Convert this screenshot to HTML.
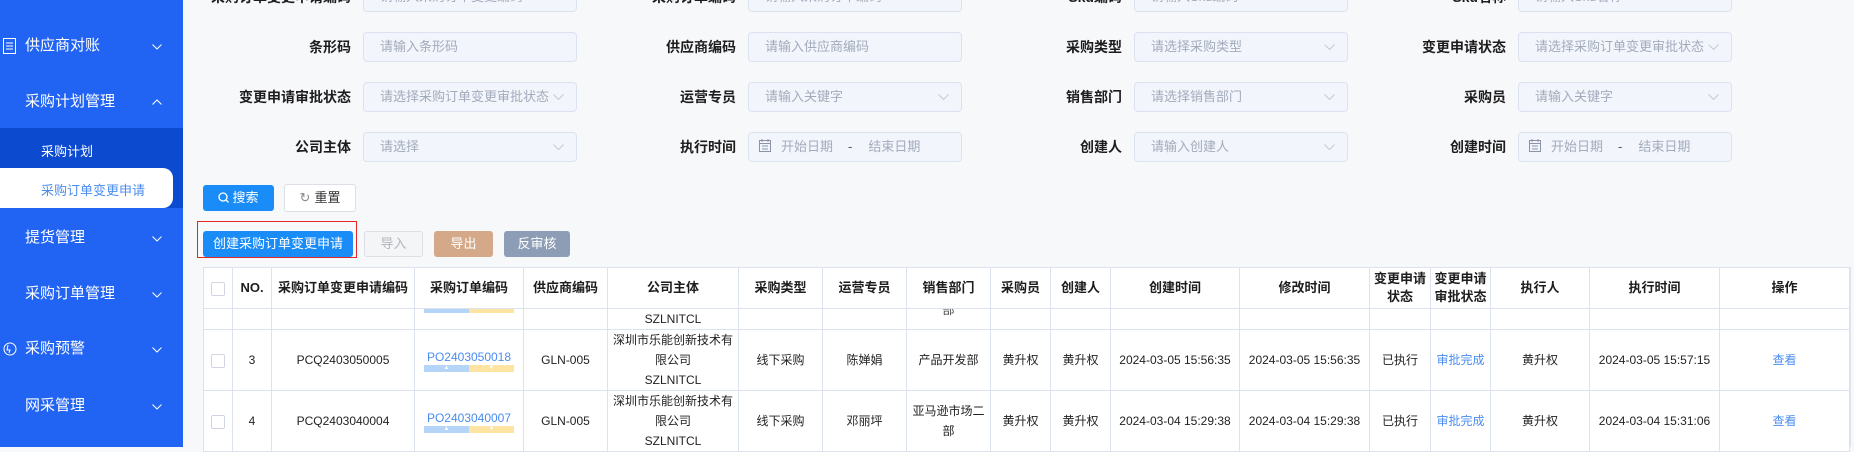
<!DOCTYPE html>
<html><head><meta charset="utf-8">
<style>
*{margin:0;padding:0;box-sizing:border-box}
body{width:1854px;height:447px;overflow:hidden;background:#f7f8fa;font-family:"Liberation Sans","Noto Sans CJK SC",sans-serif;position:relative;color:#222}
.sb{position:absolute;left:0;top:0;width:183px;height:447px;background:#2163f2}
.mi{position:absolute;left:25px;color:#fff;font-size:15px;line-height:20px}
.chev{position:absolute;left:152px;width:10px;height:6px}
.sub{position:absolute;left:0;top:128px;width:183px;height:80px;background:#0c4ad0}
.pill{position:absolute;left:0;top:168px;width:173px;height:40px;background:#fff;border-radius:0 10px 10px 0}
.lbl{position:absolute;font-size:14px;font-weight:bold;text-align:right;width:200px;line-height:20px;color:#1d1d1d}
.inp{position:absolute;width:214px;height:30px;background:#f2f5fb;border:1px solid #dbe2ef;border-radius:4px;font-size:13px;color:#a3abbb;line-height:28px;padding-left:16px;white-space:nowrap}
.inp svg.ar{position:absolute;right:12px;top:11px}
.btn{position:absolute;font-size:13px;text-align:center;border-radius:3px}
table{position:absolute;left:203px;top:267px;border-collapse:collapse;table-layout:fixed;background:#fff}
td,th{border:1px solid #dde3ee;text-align:center;vertical-align:middle;font-size:12px;line-height:20px;overflow:hidden;color:#222}
th{font-size:13px;font-weight:bold;height:41px;line-height:18px;color:#1d1d1d}
.cb{display:inline-block;width:14px;height:14px;border:1px solid #cfd6e2;border-radius:2px;background:#fff;vertical-align:middle}
.lk{color:#4a8cf0}
.bars{display:flex;width:90px;height:7px;margin:0 auto}
.bars span{flex:1;font-size:6px;line-height:7px;color:#fff}
.b1{background:#b5d5f8}.b2{background:#fde4a2}
</style></head><body>
<div class="sb">
  <svg style="position:absolute;left:3px;top:38px" width="13" height="16" viewBox="0 0 13 16"><rect x="0.5" y="0.5" width="12" height="15" fill="none" stroke="#fff"/><path d="M3 5h7M3 8h7M3 11h7" stroke="#fff"/></svg>
  <div class="mi" style="top:36px">供应商对账</div>
  <svg class="chev" style="top:44px" viewBox="0 0 10 6"><path d="M0.5 0.5L5 5 9.5 0.5" fill="none" stroke="#fff"/></svg>
  <div class="mi" style="top:92px">采购计划管理</div>
  <svg class="chev" style="top:99px" viewBox="0 0 10 6"><path d="M0.5 5.5L5 1 9.5 5.5" fill="none" stroke="#fff"/></svg>
  <div class="sub"></div>
  <div class="mi" style="top:142px;left:41px;font-size:13px">采购计划</div>
  <div class="pill"></div>
  <div class="mi" style="top:181px;left:41px;font-size:13px;color:#4a8cf0">采购订单变更申请</div>
  <div class="mi" style="top:228px">提货管理</div>
  <svg class="chev" style="top:236px" viewBox="0 0 10 6"><path d="M0.5 0.5L5 5 9.5 0.5" fill="none" stroke="#fff"/></svg>
  <div class="mi" style="top:284px">采购订单管理</div>
  <svg class="chev" style="top:292px" viewBox="0 0 10 6"><path d="M0.5 0.5L5 5 9.5 0.5" fill="none" stroke="#fff"/></svg>
  <svg style="position:absolute;left:3px;top:342px" width="14" height="14" viewBox="0 0 14 14"><circle cx="7" cy="7" r="6" fill="none" stroke="#fff"/><path d="M5 3L4 8h3l-1 3" fill="none" stroke="#fff"/></svg>
  <div class="mi" style="top:339px">采购预警</div>
  <svg class="chev" style="top:347px" viewBox="0 0 10 6"><path d="M0.5 0.5L5 5 9.5 0.5" fill="none" stroke="#fff"/></svg>
  <div class="mi" style="top:396px">网采管理</div>
  <svg class="chev" style="top:404px" viewBox="0 0 10 6"><path d="M0.5 0.5L5 5 9.5 0.5" fill="none" stroke="#fff"/></svg>
</div>

<div class="lbl" style="left:151px;top:-13px">采购订单变更申请编码</div><div class="inp" style="left:363px;top:-18px">请输入采购订单变更编码</div>
<div class="lbl" style="left:536px;top:-13px">采购订单编码</div><div class="inp" style="left:748px;top:-18px">请输入采购订单编码</div>
<div class="lbl" style="left:922px;top:-13px">Sku编码</div><div class="inp" style="left:1134px;top:-18px">请输入Sku编码</div>
<div class="lbl" style="left:1306px;top:-13px">Sku名称</div><div class="inp" style="left:1518px;top:-18px">请输入Sku名称</div>

<div class="lbl" style="left:151px;top:37px">条形码</div><div class="inp" style="left:363px;top:32px">请输入条形码</div>
<div class="lbl" style="left:536px;top:37px">供应商编码</div><div class="inp" style="left:748px;top:32px">请输入供应商编码</div>
<div class="lbl" style="left:922px;top:37px">采购类型</div><div class="inp" style="left:1134px;top:32px">请选择采购类型<svg class="ar" width="11" height="6" viewBox="0 0 11 6"><path d="M0.5 0.5L5.5 5.5 10.5 0.5" fill="none" stroke="#c4cad6"/></svg></div>
<div class="lbl" style="left:1306px;top:37px">变更申请状态</div><div class="inp" style="left:1518px;top:32px">请选择采购订单变更审批状态<svg class="ar" width="11" height="6" viewBox="0 0 11 6"><path d="M0.5 0.5L5.5 5.5 10.5 0.5" fill="none" stroke="#c4cad6"/></svg></div>

<div class="lbl" style="left:151px;top:87px">变更申请审批状态</div><div class="inp" style="left:363px;top:82px">请选择采购订单变更审批状态<svg class="ar" width="11" height="6" viewBox="0 0 11 6"><path d="M0.5 0.5L5.5 5.5 10.5 0.5" fill="none" stroke="#c4cad6"/></svg></div>
<div class="lbl" style="left:536px;top:87px">运营专员</div><div class="inp" style="left:748px;top:82px">请输入关键字<svg class="ar" width="11" height="6" viewBox="0 0 11 6"><path d="M0.5 0.5L5.5 5.5 10.5 0.5" fill="none" stroke="#c4cad6"/></svg></div>
<div class="lbl" style="left:922px;top:87px">销售部门</div><div class="inp" style="left:1134px;top:82px">请选择销售部门<svg class="ar" width="11" height="6" viewBox="0 0 11 6"><path d="M0.5 0.5L5.5 5.5 10.5 0.5" fill="none" stroke="#c4cad6"/></svg></div>
<div class="lbl" style="left:1306px;top:87px">采购员</div><div class="inp" style="left:1518px;top:82px">请输入关键字<svg class="ar" width="11" height="6" viewBox="0 0 11 6"><path d="M0.5 0.5L5.5 5.5 10.5 0.5" fill="none" stroke="#c4cad6"/></svg></div>

<div class="lbl" style="left:151px;top:137px">公司主体</div><div class="inp" style="left:363px;top:132px">请选择<svg class="ar" width="11" height="6" viewBox="0 0 11 6"><path d="M0.5 0.5L5.5 5.5 10.5 0.5" fill="none" stroke="#c4cad6"/></svg></div>
<div class="lbl" style="left:536px;top:137px">执行时间</div><div class="inp" style="left:748px;top:132px;padding-left:10px"><svg width="12" height="13" viewBox="0 0 12 13" style="vertical-align:-1px"><rect x="0.5" y="1.5" width="11" height="11" fill="none" stroke="#8b93a5"/><path d="M0.5 4.5h11M3 0v3M9 0v3M3 7h6M3 10h6" stroke="#8b93a5"/></svg><span style="margin-left:10px">开始日期</span><span style="margin-left:15px;color:#555">-</span><span style="margin-left:16px">结束日期</span></div>
<div class="lbl" style="left:922px;top:137px">创建人</div><div class="inp" style="left:1134px;top:132px">请输入创建人<svg class="ar" width="11" height="6" viewBox="0 0 11 6"><path d="M0.5 0.5L5.5 5.5 10.5 0.5" fill="none" stroke="#c4cad6"/></svg></div>
<div class="lbl" style="left:1306px;top:137px">创建时间</div><div class="inp" style="left:1518px;top:132px;padding-left:10px"><svg width="12" height="13" viewBox="0 0 12 13" style="vertical-align:-1px"><rect x="0.5" y="1.5" width="11" height="11" fill="none" stroke="#8b93a5"/><path d="M0.5 4.5h11M3 0v3M9 0v3M3 7h6M3 10h6" stroke="#8b93a5"/></svg><span style="margin-left:10px">开始日期</span><span style="margin-left:15px;color:#555">-</span><span style="margin-left:16px">结束日期</span></div>

<div class="btn" style="left:203px;top:185px;width:71px;height:26px;background:#1a8cf8;color:#fff;line-height:26px"><svg width="11" height="11" viewBox="0 0 11 11" style="vertical-align:-1px;margin-right:3px"><circle cx="5" cy="5" r="4" fill="none" stroke="#fff" stroke-width="1.3"/><path d="M8 8l2.5 2.5" stroke="#fff" stroke-width="1.3"/></svg>搜索</div>
<div class="btn" style="left:284px;top:184px;width:72px;height:28px;background:#fff;border:1px solid #dcdfe6;color:#333;line-height:26px"><span style="color:#888;margin-right:4px">↻</span>重置</div>
<div style="position:absolute;left:197px;top:221px;width:160px;height:37px;border:1.5px solid #e32626"></div>
<div class="btn" style="left:203px;top:231px;width:150px;height:26px;background:#1a8cf8;color:#fff;line-height:26px">创建采购订单变更申请</div>
<div class="btn" style="left:364px;top:231px;width:59px;height:26px;background:#f4f5f7;border:1px solid #dcdfe6;color:#b0b4bb;line-height:24px">导入</div>
<div class="btn" style="left:434px;top:231px;width:59px;height:26px;background:#d4a98a;color:#fff;line-height:26px">导出</div>
<div class="btn" style="left:504px;top:231px;width:66px;height:26px;background:#8e9db6;color:#fff;line-height:26px">反审核</div>

<table>
<colgroup><col style="width:29px"><col style="width:39px"><col style="width:143px"><col style="width:109px"><col style="width:84px"><col style="width:131px"><col style="width:84px"><col style="width:84px"><col style="width:84px"><col style="width:60px"><col style="width:60px"><col style="width:129px"><col style="width:130px"><col style="width:61px"><col style="width:60px"><col style="width:99px"><col style="width:130px"><col style="width:130px"></colgroup>
<tr><th><span class="cb"></span></th><th>NO.</th><th>采购订单变更申请编码</th><th>采购订单编码</th><th>供应商编码</th><th>公司主体</th><th>采购类型</th><th>运营专员</th><th>销售部门</th><th>采购员</th><th>创建人</th><th>创建时间</th><th>修改时间</th><th>变更申请<br>状态</th><th>变更申请<br>审批状态</th><th>执行人</th><th>执行时间</th><th>操作</th></tr>
<tr style="height:21px"><td></td><td></td><td></td><td style="vertical-align:top"><div class="bars" style="height:4px"><span class="b1"></span><span class="b2"></span></div></td><td></td><td><div style="height:20px;overflow:hidden">SZLNITCL</div></td><td></td><td></td><td style="vertical-align:top"><div style="height:10px;overflow:hidden;line-height:2px;color:#444">部</div></td><td></td><td></td><td></td><td></td><td></td><td></td><td></td><td></td><td></td></tr>
<tr style="height:60px"><td><span class="cb"></span></td><td>3</td><td>PCQ2403050005</td><td><div class="lk" style="line-height:16px">PO2403050018</div><div class="bars"><span class="b1">▲</span><span class="b2">▼</span></div></td><td>GLN-005</td><td>深圳市乐能创新技术有<br>限公司<br>SZLNITCL</td><td>线下采购</td><td>陈婵娟</td><td>产品开发部</td><td>黄升权</td><td>黄升权</td><td>2024-03-05 15:56:35</td><td>2024-03-05 15:56:35</td><td>已执行</td><td class="lk">审批完成</td><td>黄升权</td><td>2024-03-05 15:57:15</td><td class="lk">查看</td></tr>
<tr style="height:60px"><td><span class="cb"></span></td><td>4</td><td>PCQ2403040004</td><td><div class="lk" style="line-height:16px">PO2403040007</div><div class="bars"><span class="b1">▲</span><span class="b2">▼</span></div></td><td>GLN-005</td><td>深圳市乐能创新技术有<br>限公司<br>SZLNITCL</td><td>线下采购</td><td>邓丽坪</td><td>亚马逊市场二<br>部</td><td>黄升权</td><td>黄升权</td><td>2024-03-04 15:29:38</td><td>2024-03-04 15:29:38</td><td>已执行</td><td class="lk">审批完成</td><td>黄升权</td><td>2024-03-04 15:31:06</td><td class="lk">查看</td></tr>
</table>
<div style="position:absolute;left:1850px;top:267px;width:1px;height:180px;background:#dde3ee"></div>
</body></html>
